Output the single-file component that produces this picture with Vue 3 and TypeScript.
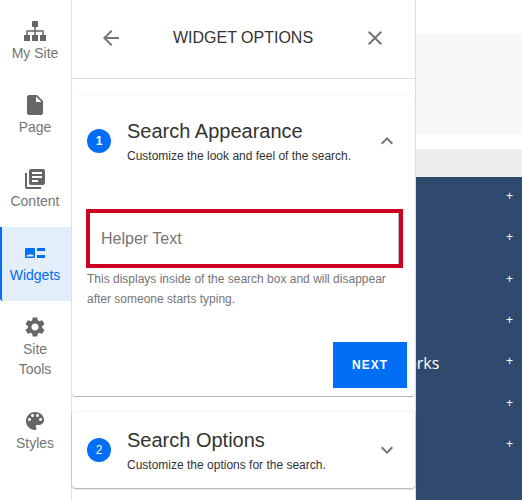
<script setup lang="ts">
interface NavItem {
  label: string
  path: string
}

const navItems: NavItem[] = [
  { label: 'Page', path: 'M6 2c-1.1 0-1.99.9-1.99 2L4 20c0 1.1.89 2 1.99 2H18c1.1 0 2-.9 2-2V8l-6-6H6zm7 7V3.5L18.5 9H13z' },
  { label: 'Content', path: 'M4 6H2v14c0 1.1.9 2 2 2h14v-2H4V6zm16-4H8c-1.1 0-2 .9-2 2v12c0 1.1.9 2 2 2h12c1.1 0 2-.9 2-2V4c0-1.1-.9-2-2-2zm-1 9H9V9h10v2zm-4 4H9v-2h6v2zm4-8H9V5h10v2z' },
]

const plusCount = 7
</script>

<template>
  <div class="page">
    <nav class="sidebar">
      <a class="nav-item nav-first">
        <svg class="nav-icon" viewBox="0 0 24 24">
          <path d="M9 2h6v6H9zM1 16h6v6H1zM9 16h6v6H9zM17 16h6v6h-6zM11.250 8h1.500v8h-1.500zM3.250 11.250h17.500v1.500H3.250zM3.250 12h1.500v4h-1.500zM19.250 12h1.500v4h-1.500z" />
        </svg>
        <span>My Site</span>
      </a>
      <a v-for="item in navItems" :key="item.label" class="nav-item">
        <svg class="nav-icon" viewBox="0 0 24 24"><path :d="item.path" /></svg>
        <span>{{ item.label }}</span>
      </a>
      <a class="nav-item nav-active">
        <svg class="nav-icon" viewBox="0 0 24 24">
          <path fill-rule="evenodd" d="M3 7h8c.6 0 1 .4 1 1v8c0 .6-.4 1-1 1H3c-.6 0-1-.4-1-1V8c0-.6.4-1 1-1zM3.500 15.500h7v-1l-1.200-1-1 .6-1.100-1.300-1.200 1.300-1-.4-1.500.8z" />
          <path d="M14 7h8v3h-8zM14 14h8v3h-8z" />
        </svg>
        <span>Widgets</span>
      </a>
      <a class="nav-item nav-tools">
        <svg class="nav-icon" viewBox="0 0 24 24">
          <path d="M19.14 12.94c.04-.3.06-.61.06-.94 0-.32-.02-.64-.07-.94l2.03-1.58c.18-.14.23-.41.12-.61l-1.92-3.32c-.12-.22-.37-.29-.59-.22l-2.39.96c-.5-.38-1.03-.7-1.62-.94l-.36-2.54c-.04-.24-.24-.41-.48-.41h-3.84c-.24 0-.43.17-.47.41l-.36 2.54c-.59.24-1.13.57-1.62.94l-2.39-.96c-.22-.08-.47 0-.59.22L2.74 8.87c-.12.21-.08.47.12.61l2.03 1.58c-.05.3-.09.63-.09.94s.02.64.07.94l-2.03 1.58c-.18.14-.23.41-.12.61l1.92 3.32c.12.22.37.29.59.22l2.39-.96c.5.38 1.03.7 1.62.94l.36 2.54c.05.24.24.41.48.41h3.84c.24 0 .44-.17.47-.41l.36-2.54c.59-.24 1.13-.56 1.62-.94l2.39.96c.22.08.47 0 .59-.22l1.92-3.32c.12-.22.07-.47-.12-.61l-2.01-1.58zM12 15.6c-1.98 0-3.6-1.62-3.6-3.6s1.62-3.6 3.6-3.6 3.6 1.62 3.6 3.6-1.62 3.6-3.6 3.6z" />
        </svg>
        <span>Site<br />Tools</span>
      </a>
      <a class="nav-item">
        <svg class="nav-icon" viewBox="0 0 24 24">
          <path d="M12 3c-4.97 0-9 4.03-9 9s4.03 9 9 9c.83 0 1.5-.67 1.5-1.5 0-.39-.15-.74-.39-1.01-.23-.26-.38-.61-.38-.99 0-.83.67-1.5 1.5-1.5H16c2.76 0 5-2.24 5-5 0-4.42-4.03-8-9-8zm-5.5 9c-.83 0-1.5-.67-1.5-1.5S5.67 9 6.5 9 8 9.67 8 10.5 7.33 12 6.5 12zm3-4C8.67 8 8 7.33 8 6.5S8.67 5 9.5 5s1.5.67 1.5 1.5S10.33 8 9.5 8zm5 0c-.83 0-1.5-.67-1.5-1.5S13.67 5 14.5 5s1.5.67 1.5 1.5S15.33 8 14.5 8zm3 4c-.83 0-1.5-.67-1.5-1.5S16.67 9 17.5 9s1.5.67 1.5 1.5-.67 1.5-1.5 1.5z" />
        </svg>
        <span>Styles</span>
      </a>
    </nav>

    <section class="panel">
      <header class="panel-head">
        <svg class="head-icon" viewBox="0 0 24 24">
          <path d="M20 11H7.83l5.59-5.59L12 4l-8 8 8 8 1.41-1.41L7.83 13H20v-2z" />
        </svg>
        <h1>WIDGET OPTIONS</h1>
        <svg class="head-icon" viewBox="0 0 24 24">
          <path d="M19 6.41 17.59 5 12 10.59 6.41 5 5 6.41 10.59 12 5 17.59 6.41 19 12 13.41 17.59 19 19 17.59 13.41 12z" />
        </svg>
      </header>

      <div class="card card-open">
        <div class="step">
          <span class="badge badge-one">1</span>
          <div class="step-text">
            <h2>Search Appearance</h2>
            <p>Customize the look and feel of the search.</p>
          </div>
          <svg class="chevron" viewBox="0 0 24 24">
            <path d="M12 8l-6 6 1.41 1.41L12 10.83l4.59 4.58L18 14z" />
          </svg>
        </div>
        <div class="step-body">
          <input class="helper-input" type="text" placeholder="Helper Text" />
          <p class="help">This displays inside of the search box and will disappear after someone starts typing.</p>
          <div class="actions">
            <button class="next" type="button">NEXT</button>
          </div>
        </div>
      </div>

      <div class="card card-closed">
        <div class="step">
          <span class="badge">2</span>
          <div class="step-text">
            <h2>Search Options</h2>
            <p>Customize the options for the search.</p>
          </div>
          <svg class="chevron" viewBox="0 0 24 24">
            <path d="M16.59 8.59 12 13.17 7.41 8.59 6 10l6 6 6-6z" />
          </svg>
        </div>
      </div>
    </section>

    <main class="site">
      <div class="site-hero"></div>
      <div class="site-strip"></div>
      <div class="site-menu">
        <div class="label">Networks</div>
        <ul class="plus-list">
          <li v-for="n in plusCount" :key="n">+</li>
        </ul>
      </div>
    </main>
  </div>
</template>

<style scoped>
.page {
  display: flex;
  width: 522px;
  height: 500px;
  overflow: hidden;
  font-family: "Liberation Sans", Arial, sans-serif;
  background: #fff;
}

.sidebar {
  flex: none;
  width: 72px;
  box-sizing: border-box;
  border-right: 1px solid #e0e0e0;
  display: flex;
  flex-direction: column;
}

.nav-item {
  display: flex;
  flex-direction: column;
  align-items: center;
  height: 74px;
  box-sizing: border-box;
  padding: 14px 1px 0 0;
  color: #757575;
  font-size: 14px;
  line-height: 20px;
  text-align: center;
}

.nav-first {
  height: 79px;
  padding-top: 19px;
}

.nav-active {
  color: #006cf0;
  background: #e3eefb;
  border-left: 2px solid #006ff5;
  border-radius: 0 0 0 3px;
  padding-right: 3px;
}

.nav-active .nav-icon {
  fill: #006ff5;
}

.nav-tools {
  height: 94px;
}

.nav-icon {
  width: 24px;
  height: 24px;
  fill: #666;
}

.panel {
  flex: none;
  position: relative;
  z-index: 1;
  width: 344px;
  height: 500px;
  box-sizing: border-box;
  border-right: 1px solid #ddd;
  background: #fff;
}

.panel-head {
  height: 79px;
  box-sizing: border-box;
  border-bottom: 1px solid #e0e0e0;
  padding: 0 28px 3px 27px;
  display: flex;
  align-items: center;
  justify-content: space-between;
}

.panel-head h1 {
  margin: 0;
  font-size: 16px;
  font-weight: 400;
  color: #333;
}

.head-icon {
  width: 24px;
  height: 24px;
  fill: #757575;
}

.card {
  background: #fff;
  border-radius: 4px;
}

.card-open {
  margin-top: 15px;
  height: 303px;
  box-sizing: border-box;
  border-top: 1px solid #f7f7f7;
  border-bottom: 1px solid #b5b5b5;
}

.card-closed {
  margin-top: 14px;
  height: 77px;
  box-sizing: border-box;
  border-top: 1px solid #f7f7f7;
  box-shadow: 0 1px 2px rgba(0, 0, 0, 0.35);
}

.step {
  display: flex;
  align-items: center;
  height: 76px;
  padding-left: 15px;
  padding-right: 16px;
}

.card-open .step {
  height: 92px;
}

.badge {
  flex: none;
  width: 24px;
  height: 24px;
  border-radius: 50%;
  background: #006ff5;
  color: #fff;
  font-size: 12px;
  line-height: 24px;
  text-align: center;
}

.badge-one {
  font-weight: 700;
}

.step-text {
  flex: 1;
  margin-left: 16px;
}

.step-text h2 {
  margin: 0 0 5px;
  font-size: 20px;
  line-height: 24px;
  font-weight: 400;
  color: #333;
}

.step-text p {
  margin: 0;
  font-size: 12px;
  line-height: 16px;
  color: #333;
}

.chevron {
  width: 24px;
  height: 24px;
  fill: #757575;
}

.step-body {
  padding: 22px 8px 0 14px;
}

.helper-input {
  display: block;
  width: 317px;
  height: 59px;
  margin: 0;
  box-sizing: border-box;
  border: 4px solid #cc0022;
  border-radius: 0;
  padding: 0 11px;
  font-family: inherit;
  font-size: 16px;
  outline: none;
  box-shadow: inset -1px 0 0 #bbb;
}

.helper-input::placeholder {
  color: #757575;
  opacity: 1;
}

.help {
  margin: 1px 10px 0 1px;
  font-size: 12px;
  line-height: 20px;
  color: #757575;
}

.actions {
  display: flex;
  justify-content: flex-end;
  margin-top: 33px;
}

.next {
  width: 74px;
  height: 46px;
  border: 0;
  padding: 0;
  background: #006ff5;
  color: #fff;
  font-family: inherit;
  font-size: 12px;
  font-weight: 700;
  letter-spacing: 1px;
}

.site {
  flex: 1;
  min-width: 0;
  display: flex;
  flex-direction: column;
  padding-top: 34px;
}

.site-hero {
  height: 100px;
  background: #f7f7f7;
}

.site-strip {
  height: 28px;
  margin-top: 15px;
  background: #eee;
}

.site-menu {
  flex: 1;
  position: relative;
  overflow: hidden;
  background: #2f4a6d;
  color: #fff;
}

.label {
  position: absolute;
  left: -48px;
  top: 175px;
  font-family: "Open Sans", sans-serif;
  font-size: 16px;
  line-height: 22px;
}

.plus-list {
  list-style: none;
  margin: 0;
  padding: 9px 9px 0 0;
  text-align: right;
  font-size: 12px;
}

.plus-list li {
  height: 41.33px;
  line-height: 20px;
}
</style>
